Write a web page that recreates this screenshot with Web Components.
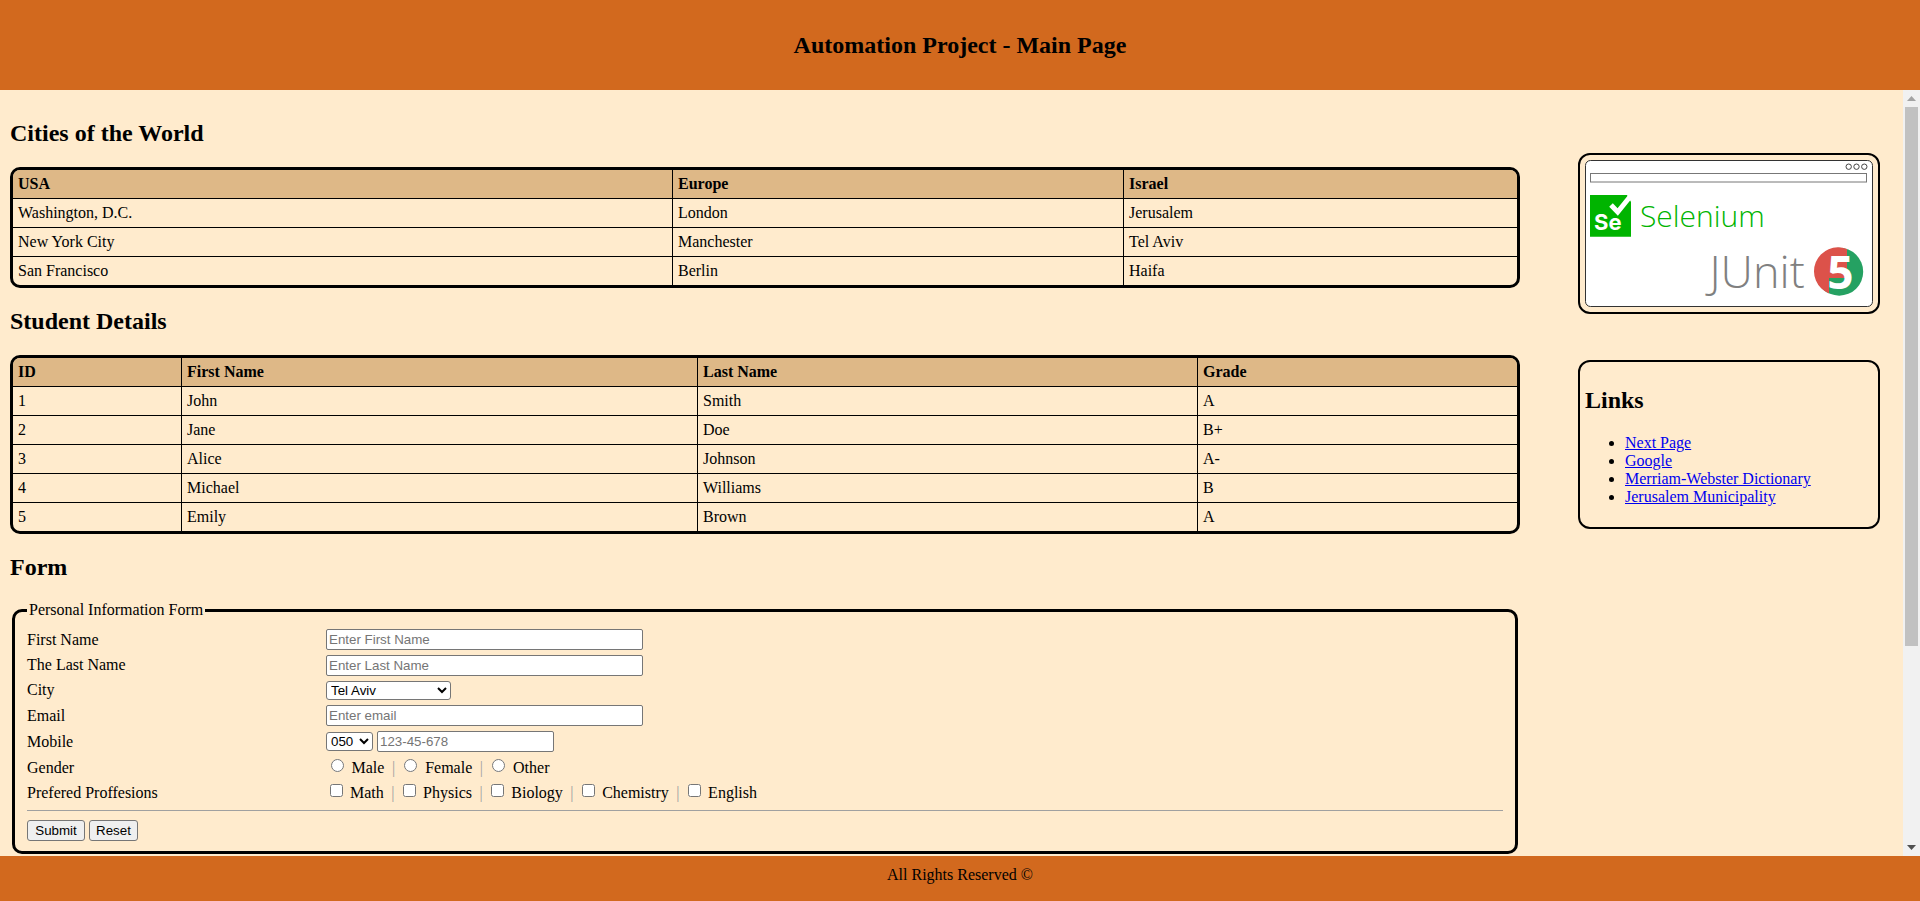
<!DOCTYPE html>
<html><head><meta charset="utf-8"><title>Automation Project</title>
<style>
html,body{margin:0;height:100%;overflow:hidden}
body{font:16px "Liberation Serif",serif;color:#000}
</style></head>
<body>
<app-shell>
  <page-bar slot="header" kind="head"><h1 style="font:bold 24px 'Liberation Serif',serif;margin:0">Automation Project - Main Page</h1></page-bar>
  <div slot="main">
    <section-title first>Cities of the World</section-title>
    <data-table cols="659px 451px 1fr" rows='[["USA","Europe","Israel"],["Washington, D.C.","London","Jerusalem"],["New York City","Manchester","Tel Aviv"],["San Francisco","Berlin","Haifa"]]'></data-table>
    <section-title>Student Details</section-title>
    <data-table cols="168px 516px 500px 1fr" rows='[["ID","First Name","Last Name","Grade"],["1","John","Smith","A"],["2","Jane","Doe","B+"],["3","Alice","Johnson","A-"],["4","Michael","Williams","B"],["5","Emily","Brown","A"]]'></data-table>
    <section-title>Form</section-title>
    <person-form></person-form>
  </div>
  <div slot="side">
    <logo-card></logo-card>
    <links-card></links-card>
  </div>
  <page-bar slot="footer" kind="foot">All Rights Reserved ©</page-bar>
</app-shell>
<script>
const tpl=(el,html)=>{el.attachShadow({mode:'open'}).innerHTML=html};
customElements.define('app-shell',class extends HTMLElement{constructor(){super();tpl(this,`<style>
:host{display:flex;flex-direction:column;height:901px;background:#FFEBCD}
.mid{flex:1;display:flex;min-height:0}
.main{width:1520px;padding-left:10px;box-sizing:border-box;flex:none;overflow:hidden}
.side{flex:1;padding:63px 23px 0 58px;box-sizing:border-box;min-width:0;overflow:hidden}
.sb{width:17px;flex:none;background:#f1f1f1;display:flex;flex-direction:column;align-items:center}
.arr{height:17px;width:17px;display:flex;align-items:center;justify-content:center;flex:none}
.thumb{width:13px;height:539px;background:#c1c1c1;flex:none}
.sp{flex:1}
</style>
<slot name="header"></slot>
<div class="mid"><div class="main"><slot name="main"></slot></div><div class="side"><slot name="side"></slot></div>
<div class="sb"><div class="arr"><svg width="9" height="5"><path d="M4.5 0L9 5H0z" fill="#a3a3a3"/></svg></div><div class="thumb"></div><div class="sp"></div><div class="arr"><svg width="9" height="5"><path d="M0 0H9L4.5 5z" fill="#505050"/></svg></div></div></div>
<slot name="footer"></slot>`)}});
customElements.define('page-bar',class extends HTMLElement{constructor(){super();tpl(this,`<style>
:host{display:flex;align-items:center;justify-content:center;background:#D2691E;flex:none;box-sizing:border-box}
:host([kind=head]){height:90px}
:host([kind=foot]){height:45px;padding-bottom:7px}
</style><slot></slot>`)}});
customElements.define('section-title',class extends HTMLElement{constructor(){super();tpl(this,`<style>
:host{display:block;font:bold 24px "Liberation Serif",serif;line-height:27px;padding-top:20px;padding-bottom:20px}
:host([first]){padding-top:30px}
</style><slot></slot>`)}});
customElements.define('data-table',class extends HTMLElement{connectedCallback(){
 const rows=JSON.parse(this.getAttribute('rows'));const cols=this.getAttribute('cols');
 tpl(this,`<style>
:host{display:block;width:1510px;box-sizing:border-box;border:3px solid #000;border-radius:10px;overflow:hidden;--c:${cols}}
.r{display:grid;grid-template-columns:var(--c);height:29px;box-sizing:border-box;border-top:1px solid #000}
.r.h{background:#DEB887;font-weight:bold;height:28px;border-top:0}
.c{padding:0 5px;line-height:28px;border-left:1px solid #000;white-space:nowrap;box-sizing:border-box}
.c:first-child{border-left:0}
</style>`+rows.map((r,i)=>`<div class="r${i?'':' h'}">${r.map(c=>`<div class="c">${c}</div>`).join('')}</div>`).join(''))}});
customElements.define('person-form',class extends HTMLElement{constructor(){super();tpl(this,`<style>
:host{display:block;width:1506px;margin-left:2px}
fieldset{margin:0;border:3px solid #000;border-radius:10px;padding:8px 12px 10px;font:16px "Liberation Serif",serif;min-width:0}
legend{padding:0 2px;font-size:16px;line-height:18px}
.row{display:grid;grid-template-columns:299px 1fr;align-items:center}
input[type=text],input[type=email],input[type=tel]{font:13.33px "Liberation Sans",Arial,sans-serif;width:317px;height:21px;box-sizing:border-box;padding:1px 2px;border:1px solid #767676;border-radius:2px;margin:0;background:#fff}
input::placeholder{color:#757575}
select{font:13.33px "Liberation Sans",Arial,sans-serif;height:19px;box-sizing:border-box;border:1px solid #767676;border-radius:3px;background:#fff;margin:0;padding:0;display:block}
.opts{display:flex;align-items:center;height:21px}
.sep{color:#a0a0a0;margin:0 4.6px 0 7.5px}
hr{border:0;border-top:1px solid #a0a0a0;height:0;margin:5px 0 9px}
button{font:13.33px "Liberation Sans",Arial,sans-serif;height:21px;padding:0;border:1px solid #767676;border-radius:3px;background:#efefef;margin:0;color:#000}
.o input{margin:0 8px 0 4.5px;vertical-align:1px}
.o input[type=checkbox]{margin:0 7px 0 4px}
</style>
<fieldset><legend>Personal Information Form</legend>
<div class="row" style="height:25px"><span>First Name</span><div><input type="text" placeholder="Enter First Name"></div></div>
<div class="row" style="height:26px"><span>The Last Name</span><div><input type="text" placeholder="Enter Last Name"></div></div>
<div class="row" style="height:24px"><span>City</span><div><select style="width:125px"><option>Tel Aviv</option></select></div></div>
<div class="row" style="height:27px"><span>Email</span><div><input type="email" placeholder="Enter email"></div></div>
<div class="row" style="height:25px"><span>Mobile</span><div style="display:flex;gap:4px;align-items:center"><select style="width:47px"><option>050</option></select><input type="tel" style="width:177px" placeholder="123-45-678"></div></div>
<div class="row" style="height:27px"><span>Gender</span><div class="opts o"><label><input type="radio" name="g">Male</label><span class="sep">|</span><label><input type="radio" name="g">Female</label><span class="sep">|</span><label><input type="radio" name="g">Other</label></div></div>
<div class="row" style="height:24px"><span>Prefered Proffesions</span><div class="opts o"><label><input type="checkbox">Math</label><span class="sep">|</span><label><input type="checkbox">Physics</label><span class="sep">|</span><label><input type="checkbox">Biology</label><span class="sep">|</span><label><input type="checkbox">Chemistry</label><span class="sep">|</span><label><input type="checkbox">English</label></div></div>
<hr>
<div style="display:flex;gap:4px"><button type="button" style="width:58px">Submit</button><button type="button" style="width:49px">Reset</button></div>
</fieldset>`)}});
customElements.define('logo-card',class extends HTMLElement{constructor(){super();tpl(this,`<style>
:host{display:block;width:302px;height:161px;box-sizing:border-box;border:2px solid #000;border-radius:12px;padding:5px}
svg{display:block}
</style>
<svg width="288" height="147" viewBox="0 0 288 147">
<rect x=".5" y=".5" width="287" height="146" rx="5" fill="#fff" stroke="#333"/>
<circle cx="263.7" cy="6.7" r="2.7" fill="none" stroke="#444"/><circle cx="271.5" cy="6.7" r="2.7" fill="none" stroke="#444"/><circle cx="279.3" cy="6.7" r="2.7" fill="none" stroke="#444"/>
<rect x="5.5" y="13.5" width="276" height="8.5" fill="#fff" stroke="#777"/>
<path d="M5 35H42L46 42V76.7H5z" fill="#00B400"/>
<path d="M26 45L32.7 52L46 35.5" fill="none" stroke="#fff" stroke-width="5"/>
<text x="9" y="70" font-family="Inter,sans-serif" font-weight="700" font-size="22" fill="#fff">Se</text>
<text x="55" y="66.7" font-family="'Open Sans',sans-serif" font-weight="300" font-size="30" fill="#00B400">Selenium</text>
<text x="124.5" y="128" font-family="'Open Sans',sans-serif" font-weight="300" font-size="45" fill="#808080">JUnit</text>
<circle cx="254.2" cy="111.7" r="24" fill="#25A162"/>
<path d="M262 89A24 24 0 0 0 244 133.5V118L262 118z" fill="#DC524A"/>
<text x="255.5" y="128.5" text-anchor="middle" font-family="'Open Sans',sans-serif" font-weight="700" font-size="46" fill="#fff">5</text>
</svg>`)}});
customElements.define('links-card',class extends HTMLElement{constructor(){super();tpl(this,`<style>
:host{display:block;width:302px;margin-top:46px;box-sizing:border-box;border:2px solid #000;border-radius:12px;padding:0 5px;height:169px}
h2{font:bold 24px/27px "Liberation Serif",serif;margin:0;padding-top:25px}
ul{margin:20px 0 0;padding:0 0 0 40px;line-height:18px}
a{color:#0000EE;text-decoration:underline}
</style><h2>Links</h2><ul>
<li><a href="#n">Next Page</a></li><li><a href="#g">Google</a></li><li><a href="#m">Merriam-Webster Dictionary</a></li><li><a href="#j">Jerusalem Municipality</a></li></ul>`)}});
</script>
</body></html>
